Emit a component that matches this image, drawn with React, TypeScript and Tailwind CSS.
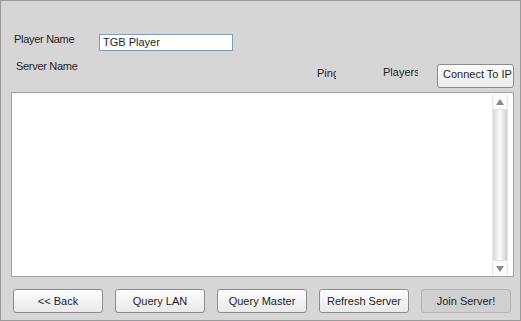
import React from 'react'

const font = { fontFamily: '"Liberation Sans", Arial, sans-serif' }

function Btn({ label, disabled }: { label: string; disabled?: boolean }) {
  return (
    <button
      className={
        disabled
          ? 'w-[90px] h-[24px] rounded-[3px] border border-[#b4b4b4] bg-[#d0d0d0] text-[11px] leading-[13px] text-[#1e1e1e]'
          : 'w-[90px] h-[24px] rounded-[3px] border border-[#8c8c8c] bg-gradient-to-b from-[#fdfdfd] to-[#e9e9e9] text-[11px] leading-[13px] text-[#1e1e1e]'
      }
    >
      {label}
    </button>
  )
}

function ScrollBar() {
  return (
    <div className="w-[16px] mt-[1px] mr-[5px] flex flex-col border-x border-[#e6e6e6]">
      <div className="h-[16px] flex items-center justify-center bg-[#fafafa] border-b border-[#e2e2e2]">
        <svg width="8" height="6" viewBox="0 0 8 6">
          <path d="M4 0 L8 6 L0 6 Z" fill="#8a8a8a" />
        </svg>
      </div>
      <div className="flex-1 bg-gradient-to-r from-[#d9d9d9] via-[#fbfbfb] to-[#cfcfcf]" />
      <div className="h-[16px] flex items-center justify-center bg-[#fafafa] border-t border-[#e2e2e2]">
        <svg width="8" height="6" viewBox="0 0 8 6">
          <path d="M0 0 L8 0 L4 6 Z" fill="#8a8a8a" />
        </svg>
      </div>
    </div>
  )
}

export default function App() {
  return (
    <div
      style={font}
      className="w-[521px] h-[321px] border border-[#9a9a9a] bg-[#d6d6d6] flex flex-col text-[11px] leading-[13px] text-[#1e1e1e] overflow-hidden"
    >
      <div className="flex items-start pt-[32px] pl-[13px]">
        <span className="w-[85px] whitespace-nowrap tracking-[-0.3px]">Player Name</span>
        <div className="mt-[1px] w-[134px] h-[17px] border border-[#7f9db9] bg-white pl-[3px] flex items-center">
          TGB Player
        </div>
      </div>

      <div className="flex items-start mt-[9px] pl-[15px] h-[28px]">
        <span className="w-[63px] overflow-hidden whitespace-nowrap tracking-[-0.3px]">Server Name</span>
        <span className="ml-[238px] mt-[7px] w-[19px] overflow-hidden whitespace-nowrap">Ping</span>
        <span className="ml-[47px] mt-[6px] w-[35px] overflow-hidden whitespace-nowrap">Players</span>
        <button className="ml-[19px] mt-[4px] w-[77px] h-[24px] rounded-[3px] border border-[#8c8c8c] bg-gradient-to-b from-[#fdfdfd] to-[#ececec] flex items-start pt-[3px] pl-[5px] overflow-hidden whitespace-nowrap text-[11px] leading-[13px]">
          Connect To IP
        </button>
      </div>

      <div className="mt-[4px] ml-[10px] w-[503px] h-[185px] border border-[#a3a3a3] bg-white flex">
        <div className="flex-1" />
        <ScrollBar />
      </div>

      <div className="mt-[12px] ml-[12px] flex gap-[12px]">
        <Btn label="<< Back" />
        <Btn label="Query LAN" />
        <Btn label="Query Master" />
        <Btn label="Refresh Server" />
        <Btn label="Join Server!" disabled />
      </div>
    </div>
  )
}
